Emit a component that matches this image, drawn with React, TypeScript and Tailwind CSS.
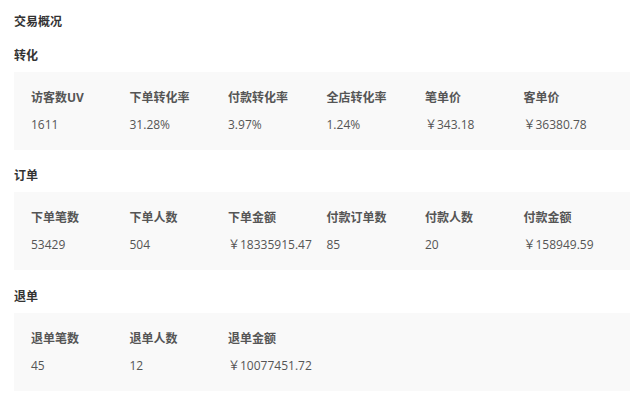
const sections = [
  {
    title: "转化",
    items: [
      { label: "访客数UV", value: "1611" },
      { label: "下单转化率", value: "31.28%" },
      { label: "付款转化率", value: "3.97%" },
      { label: "全店转化率", value: "1.24%" },
      { label: "笔单价", value: "￥343.18" },
      { label: "客单价", value: "￥36380.78" },
    ],
  },
  {
    title: "订单",
    items: [
      { label: "下单笔数", value: "53429" },
      { label: "下单人数", value: "504" },
      { label: "下单金额", value: "￥18335915.47" },
      { label: "付款订单数", value: "85" },
      { label: "付款人数", value: "20" },
      { label: "付款金额", value: "￥158949.59" },
    ],
  },
  {
    title: "退单",
    items: [
      { label: "退单笔数", value: "45" },
      { label: "退单人数", value: "12" },
      { label: "退单金额", value: "￥10077451.72" },
    ],
  },
];

function Section({ title, items }: { title: string; items: { label: string; value: string }[] }) {
  return (
    <div className="flex flex-col">
      <h3 className="text-[12px] leading-[18px] font-bold text-[#333] mb-[7px]">{title}</h3>
      <div className="bg-[#f9f9f9] h-[78px] pl-[17px] pt-[17px] grid grid-cols-[repeat(6,98.5px)] content-start">
        {items.map((it) => (
          <div key={it.label} className="flex flex-col gap-[9px]">
            <span className="text-[12px] leading-[18px] font-bold text-[#555]">{it.label}</span>
            <span className="text-[12px] leading-[18px] text-[#555]">{it.value}</span>
          </div>
        ))}
      </div>
    </div>
  );
}

export default function App() {
  return (
    <div
      className="w-[640px] h-[397px] bg-white pl-[14px] pr-[10px] pt-[13px] flex flex-col gap-[17.5px]"
      style={{ fontFamily: '"Open Sans", "Noto Sans CJK SC", sans-serif' }}
    >
      <h2 className="text-[12px] leading-[18px] font-bold text-[#333] -mb-[2px]">交易概况</h2>
      {sections.map((s) => (
        <Section key={s.title} title={s.title} items={s.items} />
      ))}
    </div>
  );
}
